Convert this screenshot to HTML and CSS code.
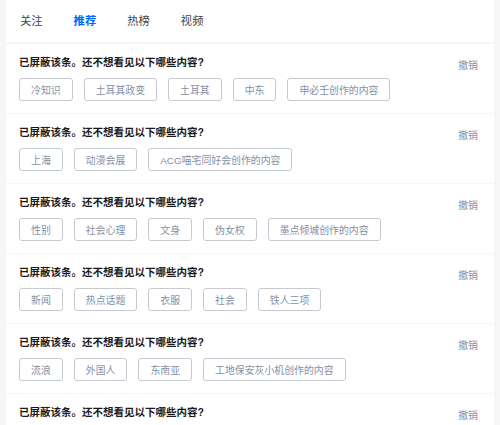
FILE: index.html
```html
<!DOCTYPE html>
<html lang="zh-CN">

<head>
  <meta charset="UTF-8" />
  <meta name="viewport" content="width=device-width, initial-scale=1.0" />
  <title>推荐</title>
<link rel="stylesheet" href="styles.css">
</head>

<body>
  <div class="page">
    <div class="tabs">
      <div class="tab">关注</div>
      <div class="tab active">推荐</div>
      <div class="tab">热榜</div>
      <div class="tab">视频</div>
    </div>

    <div class="card">
      <div class="card-body">
        <div class="card-title">已屏蔽该条。还不想看见以下哪些内容?</div>
        <div class="tags">
          <span class="tag">冷知识</span>
          <span class="tag">土耳其政变</span>
          <span class="tag">土耳其</span>
          <span class="tag">中东</span>
          <span class="tag">申必壬创作的内容</span>
        </div>
      </div>
      <div class="undo">撤销</div>
    </div>

    <div class="card">
      <div class="card-body">
        <div class="card-title">已屏蔽该条。还不想看见以下哪些内容?</div>
        <div class="tags">
          <span class="tag">上海</span>
          <span class="tag">动漫会展</span>
          <span class="tag">ACG喵宅同好会创作的内容</span>
        </div>
      </div>
      <div class="undo">撤销</div>
    </div>

    <div class="card">
      <div class="card-body">
        <div class="card-title">已屏蔽该条。还不想看见以下哪些内容?</div>
        <div class="tags">
          <span class="tag">性别</span>
          <span class="tag">社会心理</span>
          <span class="tag">文身</span>
          <span class="tag">伪女权</span>
          <span class="tag">墨点倾城创作的内容</span>
        </div>
      </div>
      <div class="undo">撤销</div>
    </div>

    <div class="card">
      <div class="card-body">
        <div class="card-title">已屏蔽该条。还不想看见以下哪些内容?</div>
        <div class="tags">
          <span class="tag">新闻</span>
          <span class="tag">热点话题</span>
          <span class="tag">衣服</span>
          <span class="tag">社会</span>
          <span class="tag">铁人三项</span>
        </div>
      </div>
      <div class="undo">撤销</div>
    </div>

    <div class="card">
      <div class="card-body">
        <div class="card-title">已屏蔽该条。还不想看见以下哪些内容?</div>
        <div class="tags">
          <span class="tag">流浪</span>
          <span class="tag">外国人</span>
          <span class="tag">东南亚</span>
          <span class="tag">工地保安灰小机创作的内容</span>
        </div>
      </div>
      <div class="undo">撤销</div>
    </div>

    <div class="card">
      <div class="card-body">
        <div class="card-title">已屏蔽该条。还不想看见以下哪些内容?</div>
      </div>
      <div class="undo">撤销</div>
    </div>
  </div>
</body>

</html>
```

FILE: styles.css
```css
body {
  margin: 0;
  font-family: "Liberation Sans", "Noto Sans CJK SC", sans-serif;
  background-color: #f6f6f6;
  overflow: hidden;
}

.page {
  padding: 0 6px 0 6px;
  display: flex;
  flex-direction: column;
  gap: 1px;
}

.tabs {
  background-color: #fff;
  height: 42px;
  display: flex;
  align-items: center;
  gap: 31px;
  padding: 0 14px 2px;
  box-sizing: border-box;
  margin-bottom: 1px;
}

.tab {
  font-size: 11.3px;
  color: #444;
}

.tab.active {
  color: #0066ff;
  font-weight: bold;
}

.card {
  background-color: #fff;
  height: 69px;
  box-sizing: border-box;
  padding: 11px 16px 0 13px;
  display: flex;
  justify-content: space-between;
}

.card-title {
  font-size: 10.5px;
  line-height: 14px;
  font-weight: bold;
  color: #1a1a1a;
  margin-bottom: 9px;
}

.tags {
  display: flex;
  gap: 11px;
}

.tag {
  height: 23px;
  box-sizing: border-box;
  padding: 0 11px;
  border: 1px solid #c6c9d0;
  border-radius: 3px;
  font-size: 9.9px;
  color: #8590a6;
  display: flex;
  align-items: center;
}

.undo {
  font-size: 9.9px;
  color: #8590a6;
  margin-top: 3px;
}
```
